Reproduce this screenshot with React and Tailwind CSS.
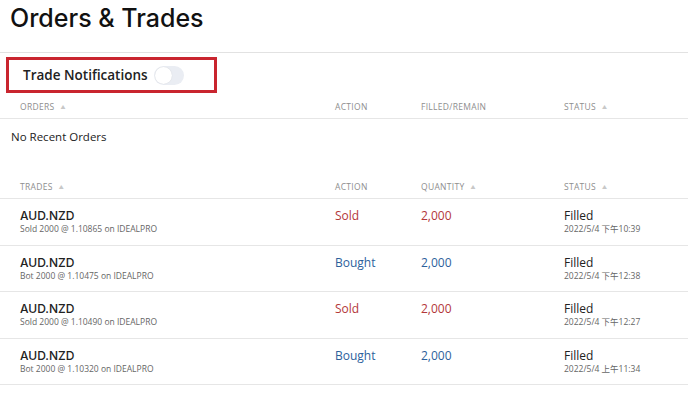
import React from 'react'

const trades = [
  { sym: 'AUD.NZD', desc: 'Sold 2000 @ 1.10865 on IDEALPRO', action: 'Sold', qty: '2,000', date: '2022/5/4 下午10:39' },
  { sym: 'AUD.NZD', desc: 'Bot 2000 @ 1.10475 on IDEALPRO', action: 'Bought', qty: '2,000', date: '2022/5/4 下午12:38' },
  { sym: 'AUD.NZD', desc: 'Sold 2000 @ 1.10490 on IDEALPRO', action: 'Sold', qty: '2,000', date: '2022/5/4 下午12:27' },
  { sym: 'AUD.NZD', desc: 'Bot 2000 @ 1.10320 on IDEALPRO', action: 'Bought', qty: '2,000', date: '2022/5/4 上午11:34' },
]

const Sort = () => <span className="ml-[6px] text-[5px] text-[#c8c8c8] align-middle">▲</span>

const cols = 'grid grid-cols-[315px_86px_143px_1fr] pl-[20px]'

const HeaderRow = ({ first, third, thirdSort }) => (
  <div className={`${cols} h-[26px] items-center border-b border-[#e6e6e6] pt-[3px] text-[8.5px] tracking-[0.3px] text-[#8e8e8e]`}>
    <div>{first}<Sort /></div>
    <div>ACTION</div>
    <div>{third}{thirdSort && <Sort />}</div>
    <div>STATUS<Sort /></div>
  </div>
)

export default function App() {
  return (
    <div className="h-[396px] w-[688px] overflow-hidden bg-white text-[#1a1a1a]" style={{ fontFamily: '"Open Sans", "Noto Sans CJK SC", sans-serif' }}>
      <div className="h-[53px] border-b border-[#e2e2e2] pl-[10px] pt-[1px] font-['Inter',sans-serif] text-[25px] font-medium leading-[35px] text-[#111]">
        Orders &amp; Trades
      </div>
      <div className="pl-[6px] pt-[4px]">
        <div className="flex h-[36px] w-[211px] items-center border-[3px] border-[#c9252f] pl-[14px]">
          <span className="text-[13.5px] font-semibold text-[#222]">Trade Notifications</span>
          <span className="ml-[6px] flex h-[19px] w-[30px] items-center rounded-full bg-[#eaedf3] pl-[1px]">
            <span className="h-[17px] w-[17px] rounded-full bg-white shadow-[0_0_1px_rgba(0,0,0,0.15)]" />
          </span>
        </div>
      </div>
      <HeaderRow first="ORDERS" third="FILLED/REMAIN" />
      <div className="h-[54px] pl-[11px] pt-[9px] text-[11.5px] text-[#222]">No Recent Orders</div>
      <HeaderRow first="TRADES" third="QUANTITY" thirdSort />
      {trades.map((t, i) => {
        const color = t.action === 'Sold' ? 'text-[#b3373a]' : 'text-[#2d5f9c]'
        return (
          <div key={i} className={`${cols} h-[46.5px] border-b border-[#e6e6e6] pt-[9px]`}>
            <div>
              <div className="font-['Inter',sans-serif] text-[12px] font-medium leading-[15px] text-[#222]">{t.sym}</div>
              <div className="text-[8.5px] leading-[12px] text-[#666]">{t.desc}</div>
            </div>
            <div className={`text-[12px] leading-[15px] ${color}`}>{t.action}</div>
            <div className={`text-[12px] leading-[15px] ${color}`}>{t.qty}</div>
            <div>
              <div className="text-[12px] leading-[15px] text-[#222]">Filled</div>
              <div className="text-[8.5px] leading-[12px] text-[#666]">{t.date}</div>
            </div>
          </div>
        )
      })}
    </div>
  )
}
